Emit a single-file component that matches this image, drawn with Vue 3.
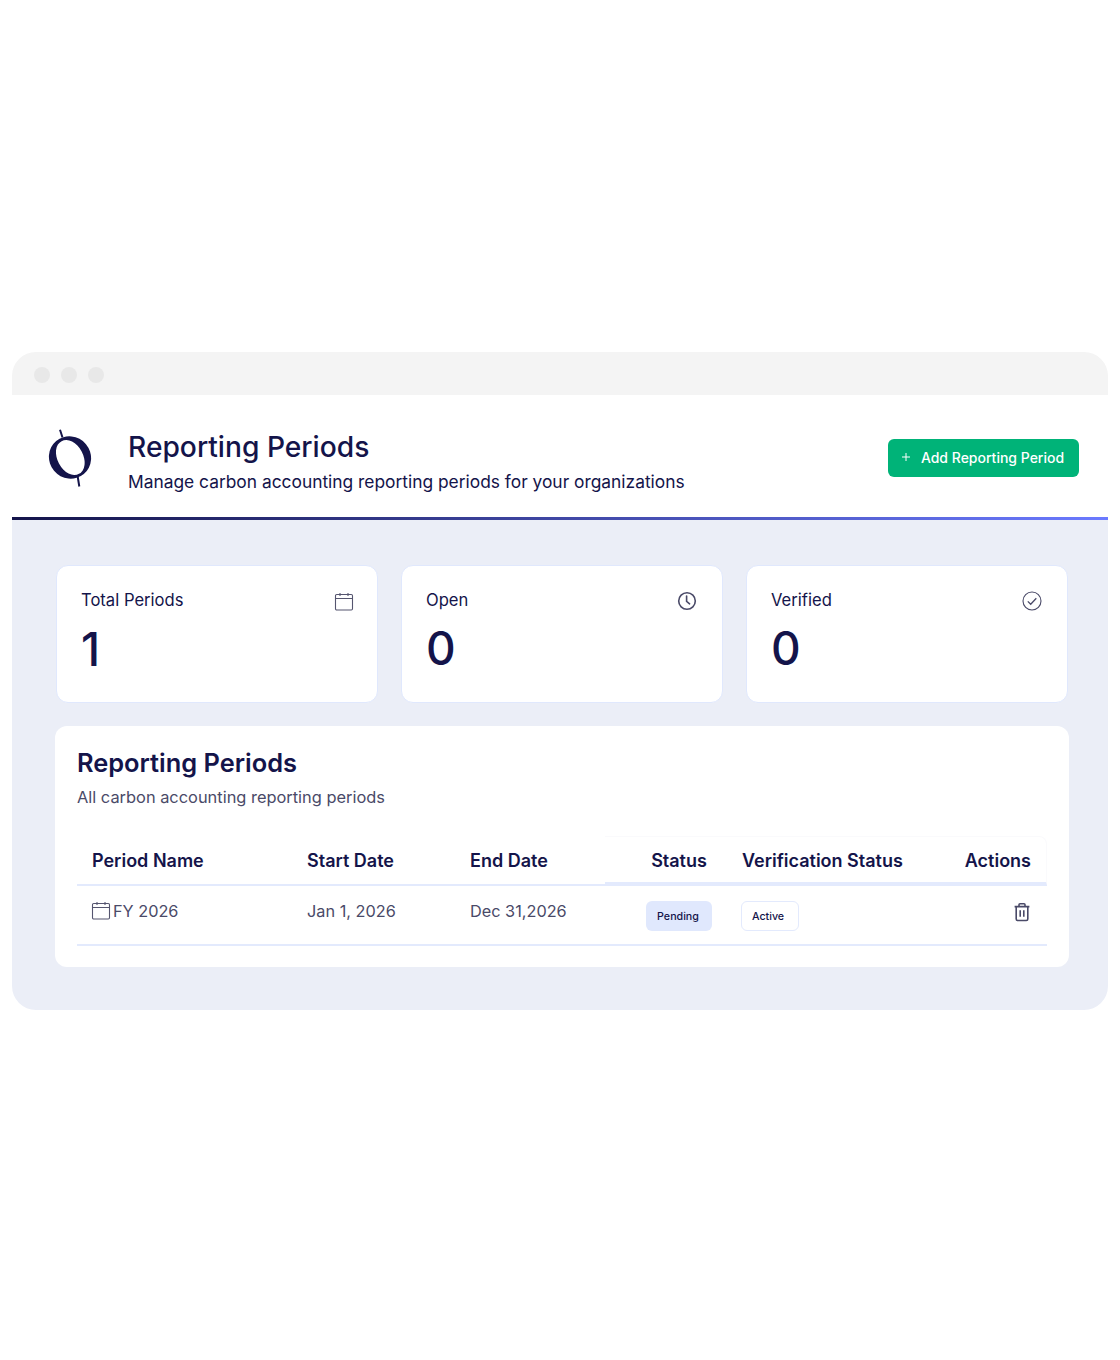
<script setup>
const stats = [
  { label: 'Total Periods', value: '1', icon: 'calendar' },
  { label: 'Open', value: '0', icon: 'clock' },
  { label: 'Verified', value: '0', icon: 'check' }
]
</script>

<template>
  <div class="page">
    <div class="window">
      <div class="titlebar">
        <span class="dot"></span>
        <span class="dot"></span>
        <span class="dot"></span>
      </div>

      <header class="header">
        <svg class="logo" width="44" height="60" viewBox="0 0 44 60">
          <path d="M12 .8L14.5 8.5M29.6 47L31.3 57.5" stroke="#14144a" stroke-width="2" fill="none" />
          <path fill="#14144a" fill-rule="evenodd" d="M8.2 12A21.5 20.8 50 1 0 35.8 45A21.5 20.8 50 1 0 8.2 12ZM13.62 12.17A18.5 12.5 62 1 1 30.98 44.83A18.5 12.5 62 1 1 13.62 12.17Z" />
        </svg>
        <div class="heading">
          <h1>Reporting Periods</h1>
          <p>Manage carbon accounting reporting periods for your organizations</p>
        </div>
        <button class="add-btn">
          <svg width="10" height="10" viewBox="0 0 10 10">
            <path d="M5 1v8M1 5h8" stroke="#fff" stroke-width="1" fill="none" />
          </svg>
          Add Reporting Period
        </button>
      </header>
      <div class="rule"></div>

      <main class="content">
        <section class="stats">
          <div v-for="s in stats" :key="s.label" class="stat">
            <div class="stat-top">
              <span class="stat-label">{{ s.label }}</span>
              <svg v-if="s.icon === 'calendar'" class="stat-icon" width="20" height="20" viewBox="0 0 20 20" fill="none" stroke="#55556f" stroke-width="1.1">
                <rect x="1.5" y="2.5" width="17" height="15.5" rx="1.2" />
                <path d="M1.5 6.5h17M6 1v3M14 1v3" />
              </svg>
              <svg v-else-if="s.icon === 'clock'" class="stat-icon shifted" width="20" height="20" viewBox="0 0 20 20" fill="none" stroke="#4a4a68" stroke-width="1.6">
                <circle cx="10" cy="10" r="8.3" />
                <path d="M9.6 5v5.4l3 2.4" stroke-linecap="round" />
              </svg>
              <svg v-else class="stat-icon shifted" width="20" height="20" viewBox="0 0 20 20" fill="none" stroke="#4a4a68" stroke-width="1.1">
                <circle cx="10" cy="10" r="9" />
                <path d="M5.8 10.4l2.9 2.9 5.6-6" stroke-width="1.3" />
              </svg>
            </div>
            <div class="stat-value">{{ s.value }}</div>
          </div>
        </section>

        <section class="panel">
          <h2>Reporting Periods</h2>
          <p class="panel-sub">All carbon accounting reporting periods</p>

          <div class="table">
            <div class="head-patch"></div>
            <div class="row head">
              <div class="cell">Period Name</div>
              <div class="cell">Start Date</div>
              <div class="cell">End Date</div>
              <div class="cell center status-head">Status</div>
              <div class="cell">Verification Status</div>
              <div class="cell right">Actions</div>
            </div>
            <div class="row body">
              <div class="cell name">
                <svg width="20" height="20" viewBox="0 0 20 20" fill="none" stroke="#55556f" stroke-width="1.1">
                  <rect x="1.5" y="2.5" width="17" height="15.5" rx="1.2" />
                  <path d="M1.5 6.5h17M6 1v3M14 1v3" />
                </svg>
                FY 2026
              </div>
              <div class="cell">Jan 1, 2026</div>
              <div class="cell">Dec 31,2026</div>
              <div class="cell center"><span class="badge pending">Pending</span></div>
              <div class="cell"><span class="badge active">Active</span></div>
              <div class="cell right">
                <svg class="trash" width="20" height="20" viewBox="0 0 20 20" fill="none" stroke="#4a4a68" stroke-width="1.6">
                  <path d="M2.6 4.6h14.8M7 4.4V2.8c0-.6.4-1 1-1h4c.6 0 1 .4 1 1v1.6" />
                  <path d="M4.2 4.6v12.4c0 .9.6 1.5 1.5 1.5h8.6c.9 0 1.5-.6 1.5-1.5V4.6" />
                  <path d="M8.2 8.2v6.6M11.8 8.2v6.6" />
                </svg>
              </div>
            </div>
          </div>
        </section>
      </main>
    </div>
  </div>
</template>

<style>
html, body {
  background: #fff;
}
</style>

<style scoped>
.page {
  height: 1360px;
  box-sizing: border-box;
  padding: 352px 12px 0;
  font-family: Inter, "Liberation Sans", sans-serif;
  color: #14144a;
}

.window {
  border-radius: 24px;
  overflow: hidden;
}

.titlebar {
  height: 43px;
  box-sizing: border-box;
  padding: 2px 22px 0;
  background: #f4f4f4;
  display: flex;
  align-items: center;
  gap: 11px;
}

.dot {
  width: 16px;
  height: 16px;
  border-radius: 50%;
  background: #e8e8e8;
}

.header {
  height: 122px;
  background: #fff;
  display: flex;
  align-items: center;
  padding: 0 29px 0 36px;
}

.logo {
  flex: none;
  margin-top: 5px;
}

.heading {
  margin: 11px 0 0 36px;
  flex: 1;
}

.heading h1 {
  margin: 0;
  font-size: 28.2px;
  line-height: 34px;
  font-weight: 500;
}

.heading p {
  margin: 6px 0 0;
  font-size: 17.37px;
  line-height: 24px;
}

.add-btn {
  display: flex;
  align-items: center;
  justify-content: center;
  gap: 10px;
  width: 191px;
  height: 38px;
  margin-top: 4px;
  padding: 0 2px 2px 0;
  border: 0;
  border-radius: 6px;
  background: #00b378;
  color: #fff;
  font-family: inherit;
  font-size: 14px;
  font-weight: 500;
}

.rule {
  height: 3px;
  background: linear-gradient(90deg, #14144a 0%, #6b7aff 100%);
}

.content {
  background: #ebeef7;
  padding: 45px 39px 43px 43px;
}

.stats {
  display: grid;
  grid-template-columns: repeat(3, 322px);
  gap: 23px;
  margin-left: 1px;
}

.stat {
  height: 138px;
  box-sizing: border-box;
  background: #fff;
  border: 1px solid #e0e8fd;
  border-radius: 12px;
  padding: 24px 24px 0;
}

.stat-top {
  display: flex;
  justify-content: space-between;
  align-items: flex-start;
}

.stat-label {
  font-size: 16.6px;
  line-height: 20px;
}

.stat-icon {
  margin-top: 2px;
  margin-right: -1px;
}

.stat-icon.shifted {
  margin-top: 1px;
  margin-right: 1px;
}

.stat-value {
  margin-top: 10px;
  font-size: 46px;
  line-height: 54px;
  font-weight: 500;
}

.panel {
  margin-top: 23px;
  background: #fff;
  border-radius: 12px;
  padding: 20px 22px 21px;
}

.panel h2 {
  margin: 0;
  font-size: 25.4px;
  line-height: 34px;
  font-weight: 600;
}

.panel-sub {
  margin: 5px 0 0;
  font-size: 16.4px;
  line-height: 24px;
  color: #4a4a68;
}

.table {
  position: relative;
  margin-top: 27px;
}

.head-patch {
  position: absolute;
  left: 528px;
  right: 0;
  top: 0;
  height: 49px;
  box-sizing: border-box;
  border: 1px solid #fafafc;
  border-left: 0;
  border-bottom: 3px solid #e3eafd;
  border-radius: 0 8px 0 0;
}

.row {
  display: grid;
  grid-template-columns: 215px 163px 176px 96px 223px 97px;
  align-items: center;
  border-bottom: 2px solid #e3eafd;
}

.head {
  height: 50px;
  box-sizing: border-box;
  font-size: 18px;
  font-weight: 600;
}

.head .right {
  padding-right: 16px;
}

.status-head {
  padding-left: 4px;
}

.body {
  height: 60px;
  box-sizing: border-box;
  font-size: 16.3px;
  color: #4a4a68;
}

.cell {
  padding: 0 15px;
  white-space: nowrap;
}

.body .cell {
  margin-top: -9px;
}

.center {
  padding: 0;
  text-align: center;
}

.right {
  padding: 0 15px 0 0;
  text-align: right;
}

.name {
  display: flex;
  align-items: center;
  gap: 2px;
}

.name svg {
  flex: none;
  margin-left: -1px;
}

.trash {
  display: inline-block;
  vertical-align: middle;
  margin-top: 2px;
}

.badge {
  display: inline-flex;
  align-items: center;
  justify-content: center;
  height: 30px;
  box-sizing: border-box;
  padding-top: 1px;
  border-radius: 6px;
  font-size: 10.7px;
  font-weight: 500;
  color: #14144a;
  margin-top: 10px;
}

.pending {
  width: 66px;
  padding-right: 2px;
  background: #e0e8fd;
}

.active {
  width: 58px;
  margin-left: -1px;
  padding-right: 4px;
  background: #fff;
  border: 1px solid #e3eafd;
}
</style>
